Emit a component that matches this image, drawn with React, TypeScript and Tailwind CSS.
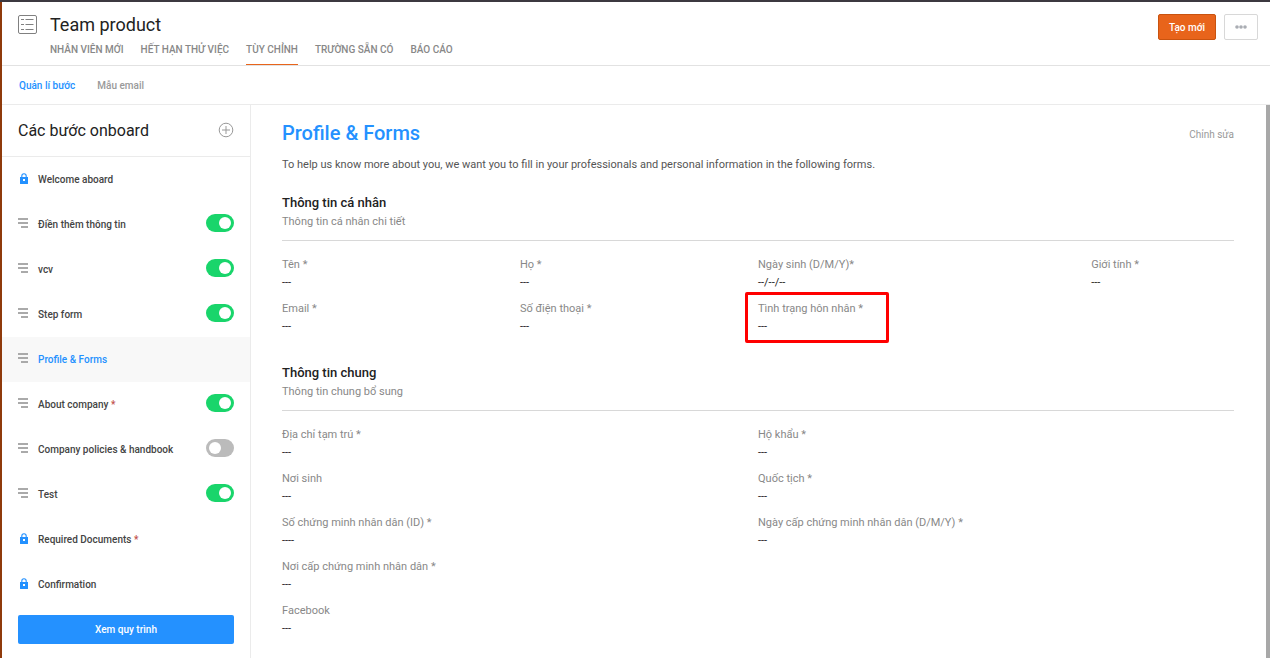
import { useState } from 'react';
import clsx from 'clsx';

interface Step {
  id: string;
  name: string;
  locked?: boolean;
  enabled?: boolean;
  required?: boolean;
}

interface Field {
  label: string;
  value: string;
  highlighted?: boolean;
}

const TABS = ['NHÂN VIÊN MỚI', 'HẾT HẠN THỬ VIỆC', 'TÙY CHỈNH', 'TRƯỜNG SẴN CÓ', 'BÁO CÁO'];

const STEPS: Step[] = [
  { id: 'welcome', name: 'Welcome aboard', locked: true },
  { id: 'info', name: 'Điền thêm thông tin', enabled: true },
  { id: 'vcv', name: 'vcv', enabled: true },
  { id: 'step-form', name: 'Step form', enabled: true },
  { id: 'profile', name: 'Profile & Forms' },
  { id: 'about', name: 'About company', enabled: true, required: true },
  { id: 'policies', name: 'Company policies & handbook', enabled: false },
  { id: 'test', name: 'Test', enabled: true },
  { id: 'documents', name: 'Required Documents', locked: true, required: true },
  { id: 'confirmation', name: 'Confirmation', locked: true },
];

const PERSONAL_FIELDS: Field[] = [
  { label: 'Tên *', value: '---' },
  { label: 'Họ *', value: '---' },
  { label: 'Ngày sinh (D/M/Y)*', value: '--/--/--' },
  { label: 'Giới tính *', value: '---' },
  { label: 'Email *', value: '---' },
  { label: 'Số điện thoại *', value: '---' },
  { label: 'Tình trạng hôn nhân *', value: '---', highlighted: true },
];

const GENERAL_FIELDS: Field[] = [
  { label: 'Địa chỉ tạm trú *', value: '---' },
  { label: 'Hộ khẩu *', value: '---' },
  { label: 'Nơi sinh', value: '---' },
  { label: 'Quốc tịch *', value: '---' },
  { label: 'Số chứng minh nhân dân (ID) *', value: '----' },
  { label: 'Ngày cấp chứng minh nhân dân (D/M/Y) *', value: '---' },
  { label: 'Nơi cấp chứng minh nhân dân *', value: '---' },
];

const ListIcon = () => (
  <svg width="19" height="19" viewBox="0 0 19 19" fill="none" stroke="#808080" aria-hidden="true">
    <rect x="0.5" y="0.5" width="18" height="18" rx="1.5" />
    <path d="M3 4.5h3M7.5 4.5h8M3 9.5h3M7.5 9.5h8M3 14.5h3M7.5 14.5h8" />
  </svg>
);

const PlusCircleIcon = () => (
  <svg width="16" height="16" viewBox="0 0 16 16" fill="none" stroke="#999" aria-hidden="true">
    <circle cx="8" cy="8" r="6.8" />
    <path d="M8 4v8M4 8h8" />
  </svg>
);

const LockIcon = () => (
  <svg width="8" height="11" viewBox="0 0 8 11" aria-hidden="true">
    <path d="M1.8 5V3a2.2 2.2 0 0 1 4.4 0v2" fill="none" stroke="#2491ff" strokeWidth="1.1" />
    <path d="M0 4h8v6.5a.5.5 0 0 1-.5.5h-7a.5.5 0 0 1-.5-.5z" fill="#2491ff" />
    <rect x="3" y="6" width="2" height="2" fill="#fff" />
  </svg>
);

const DragIcon = () => (
  <svg width="10" height="10" viewBox="0 0 10 10" fill="#aaa" aria-hidden="true">
    <path d="M0 0h10v2H0zM0 4h10v2H0zM3 8h7v2H3z" />
  </svg>
);

const FieldItem = ({ field }: { field: Field }) => (
  <div className="relative text-[11px] leading-[18px]">
    <dt className="text-[#888]">{field.label}</dt>
    <dd className="text-[#222]">{field.value}</dd>
    {field.highlighted && (
      <span className="absolute -top-2 -left-[13px] h-[51px] w-36 rounded-xs border-3 border-[#f00]" />
    )}
  </div>
);

const SectionHeader = ({ title, subtitle }: { title: string; subtitle: string }) => (
  <div className="border-b border-[#d8d8d8] pb-[9px]">
    <h3 className="text-[13px] leading-5 font-medium text-[#222]">{title}</h3>
    <p className="text-[11px] leading-[18px] text-[#888]">{subtitle}</p>
  </div>
);

const App = () => {
  const [activeTab, setActiveTab] = useState('TÙY CHỈNH');
  const [activeStep, setActiveStep] = useState('profile');
  const [enabled, setEnabled] = useState<Record<string, boolean>>(() =>
    Object.fromEntries(STEPS.map((step) => [step.id, !!step.enabled]))
  );

  const toggleStep = (id: string) => {
    setEnabled((prev) => ({ ...prev, [id]: !prev[id] }));
  };

  return (
    <div className="flex min-h-screen flex-col border-t-2 border-t-[#3c3940] bg-white font-[Roboto,sans-serif] text-[#333]">
      <div className="flex flex-1 flex-col border-l-2 border-[#8f3a0b]">
        <header className="flex h-16 items-start border-b border-[#e2e2e2] pr-3 pl-4">
          <span className="mt-[13px] mr-[13px]">
            <ListIcon />
          </span>
          <div className="flex-1">
            <h1 className="mt-3 text-lg leading-[22px] text-[#222]">Team product</h1>
            <nav className="flex gap-[17px]">
              {TABS.map((tab) => (
                <button
                  key={tab}
                  type="button"
                  onClick={() => setActiveTab(tab)}
                  className={clsx(
                    'h-[29px] border-b pb-px text-[10px] font-medium whitespace-nowrap text-[#888]',
                    activeTab === tab ? 'border-[#e8641b]' : 'border-transparent'
                  )}
                >
                  {tab}
                </button>
              ))}
            </nav>
          </div>
          <div className="mt-3 flex gap-2">
            <button
              type="button"
              className="h-[26px] rounded-xs border border-[#c9530f] bg-[#e8641b] px-2.5 text-[10px] font-medium text-white"
            >
              Tạo mới
            </button>
            <button
              type="button"
              aria-label="Thêm"
              className="flex h-[26px] w-[34px] items-center justify-center rounded-xs border border-[#d8d8d8]"
            >
              <svg width="12" height="4" viewBox="0 0 12 4" fill="#aaadb3">
                <circle cx="2" cy="2" r="1.8" />
                <circle cx="6" cy="2" r="1.8" />
                <circle cx="10" cy="2" r="1.8" />
              </svg>
            </button>
          </div>
        </header>

        <nav className="flex h-[39px] items-center gap-[22px] border-b border-[#ebebeb] px-[17px] text-[10px] font-medium">
          <a href="#steps" className="text-[#2491ff]">
            Quản lí bước
          </a>
          <a href="#email" className="text-[#999]">
            Mẫu email
          </a>
        </nav>

        <div className="flex flex-1">
          <aside className="w-[249px] shrink-0 border-r border-[#ebebeb]">
            <div className="flex h-[52px] items-center justify-between border-b border-[#ebebeb] px-4">
              <h2 className="text-base text-[#222]">Các bước onboard</h2>
              <button type="button" aria-label="Thêm bước" className="pb-0.5">
                <PlusCircleIcon />
              </button>
            </div>

            <ul>
              {STEPS.map((step) => (
                <li
                  key={step.id}
                  className={clsx('flex h-[45px] items-start px-4', activeStep === step.id && 'bg-[#f8f8f8]')}
                >
                  <span className="mt-4 flex w-5 shrink-0">
                    {step.locked ? (
                      <span className="ml-0.5">
                        <LockIcon />
                      </span>
                    ) : (
                      <DragIcon />
                    )}
                  </span>
                  <button
                    type="button"
                    onClick={() => setActiveStep(step.id)}
                    className={clsx(
                      'flex-1 text-left text-[10px] leading-[45px] font-medium whitespace-nowrap',
                      activeStep === step.id ? 'text-[#2491ff]' : 'text-[#444]'
                    )}
                  >
                    {step.name}
                    {step.required && <span className="text-[#c0504d]"> *</span>}
                  </button>
                  {step.enabled !== undefined && (
                    <input
                      type="checkbox"
                      role="switch"
                      aria-label={step.name}
                      checked={enabled[step.id]}
                      onChange={() => toggleStep(step.id)}
                      className="mt-3 flex h-[18px] w-7 shrink-0 appearance-none items-center rounded-full bg-[#bbb] px-[3px] before:size-3 before:rounded-full before:bg-white checked:justify-end checked:bg-[#19d56b]"
                    />
                  )}
                </li>
              ))}
            </ul>

            <div className="px-4 pt-2 pb-3.5">
              <button
                type="button"
                className="h-[29px] w-full rounded-xs bg-[#2491ff] text-[10px] font-medium text-white"
              >
                Xem quy trình
              </button>
            </div>
          </aside>

          <main className="min-w-0 flex-1 pt-4 pr-8 pl-[31px]">
            <div className="flex items-center justify-between">
              <h2 className="text-xl leading-6 font-medium text-[#2491ff]">Profile &amp; Forms</h2>
              <a href="#edit" className="pt-0.5 text-[10px] text-[#999]">
                Chỉnh sửa
              </a>
            </div>
            <p className="mt-3 text-[11px] leading-4 text-[#555]">
              To help us know more about you, we want you to fill in your professionals and personal information in the
              following forms.
            </p>

            <section className="mt-5">
              <SectionHeader title="Thông tin cá nhân" subtitle="Thông tin cá nhân chi tiết" />
              <dl className="mt-[15px] grid grid-cols-[25%_25%_35%_15%] gap-y-2">
                {PERSONAL_FIELDS.map((field) => (
                  <FieldItem key={field.label} field={field} />
                ))}
              </dl>
            </section>

            <section className="mt-[27px]">
              <SectionHeader title="Thông tin chung" subtitle="Thông tin chung bổ sung" />
              <dl className="mt-[15px] grid grid-cols-2 gap-y-2">
                {GENERAL_FIELDS.map((field) => (
                  <FieldItem key={field.label} field={field} />
                ))}
                <div className="col-span-2">
                  <FieldItem field={{ label: 'Facebook', value: '---' }} />
                </div>
              </dl>
            </section>
          </main>

          <div className="w-1 shrink-0 bg-[#a8a8a8]" />
        </div>
      </div>
    </div>
  );
};

export default App;
